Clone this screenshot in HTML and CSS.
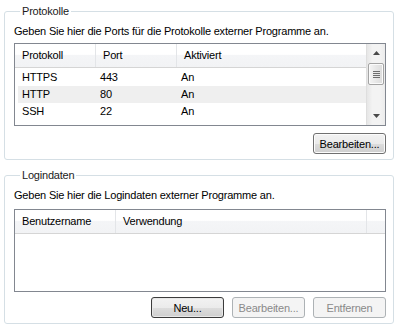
FILE: index.html
```html
<!DOCTYPE html>
<html lang="de">
<head>
<meta charset="utf-8">
<link rel="stylesheet" href="styles.css">
</head>
<body>
<div class="page">
  <fieldset class="group g1">
    <legend>Protokolle</legend>
    <div class="desc">Geben Sie hier die Ports für die Protokolle externer Programme an.</div>
    <div class="lv">
      <div class="lv-main">
        <div class="lv-head">
          <div class="hc c1">Protokoll</div>
          <div class="hc c2">Port</div>
          <div class="hc c3">Aktiviert</div>
        </div>
        <div class="rows">
          <div class="row"><span class="c1">HTTPS</span><span class="c2">443</span><span class="c3">An</span></div>
          <div class="row alt"><span class="c1">HTTP</span><span class="c2">80</span><span class="c3">An</span></div>
          <div class="row"><span class="c1">SSH</span><span class="c2">22</span><span class="c3">An</span></div>
        </div>
      </div>
      <div class="sb">
        <div class="sb-btn"><svg width="7" height="4" viewBox="0 0 7 4"><path d="M3.5 0 L7 4 L0 4 Z" fill="#4a4a4a"/></svg></div>
        <div class="sb-track">
          <div class="thumb"><span></span><span></span><span></span><span></span></div>
        </div>
        <div class="sb-btn"><svg width="7" height="4" viewBox="0 0 7 4"><path d="M0 0 L7 0 L3.5 4 Z" fill="#4a4a4a"/></svg></div>
      </div>
    </div>
    <div class="btns">
      <button class="btn">Bearbeiten...</button>
    </div>
  </fieldset>

  <fieldset class="group g2">
    <legend>Logindaten</legend>
    <div class="desc">Geben Sie hier die Logindaten externer Programme an.</div>
    <div class="lv lv2">
      <div class="lv-main">
        <div class="lv-head">
          <div class="hc d1">Benutzername</div>
          <div class="hc d2">Verwendung</div>
          <div class="hc d3"></div>
        </div>
      </div>
    </div>
    <div class="btns">
      <button class="btn def">Neu...</button>
      <button class="btn" disabled>Bearbeiten...</button>
      <button class="btn" disabled>Entfernen</button>
    </div>
  </fieldset>
</div>
</body>
</html>
```

FILE: styles.css
```css
* { box-sizing: border-box; }
body {
  margin: 0;
  background: #fff;
  font-family: "Liberation Sans", Arial, sans-serif;
  font-size: 11px;
  letter-spacing: -0.2px;
  color: #000;
}
.page {
  padding: 4px 0 0 4px;
  width: 394px;
}
.group {
  margin: 0;
  border: 1px solid #d5dfe5;
  border-radius: 3px;
  padding: 0 7px 5px 9px;
  min-width: 0;
}
.group legend {
  padding: 0 2px;
  margin-left: 6px;
  line-height: 14px;
  height: 14px;
  color: #1b1b1b;
}
.g2 { margin-top: 8px; }
.desc {
  margin-top: 6px;
  line-height: 14px;
  height: 14px;
  white-space: nowrap;
}
.lv {
  margin-top: 5px;
  height: 83px;
  border: 1px solid #828790;
  display: flex;
  background: #fff;
}
.g2 .lv { margin-top: 7px; }
.lv-main {
  flex: 1;
  display: flex;
  flex-direction: column;
  min-width: 0;
}
.lv-head {
  height: 24px;
  display: flex;
  background: linear-gradient(#ffffff 0%, #ffffff 45%, #f4f5f7 50%, #f2f3f5 100%);
  border-bottom: 1px solid #d5d5d5;
}
.hc {
  line-height: 23px;
  padding-left: 7px;
  border-right: 1px solid #e3e5e8;
}
.hc.c1 { width: 81px; }
.hc.c2 { width: 81px; }
.hc.c3 { flex: 1; border-right: 0; }
.hc.d1 { width: 101px; }
.hc.d2 { width: 251px; }
.hc.d3 { flex: 1; border-right: 0; }
.rows { padding: 1px 0 0 3px; }
.row {
  display: flex;
  height: 17px;
  line-height: 17px;
}
.row span { padding-left: 4px; }
.row .c1 { width: 78px; }
.row .c2 { width: 81px; }
.row.alt { background: #efefef; }
.sb {
  width: 19px;
  border-left: 1px solid #dedede;
  background: linear-gradient(to right, #e6e6e6, #f3f3f3 30%, #f3f3f3 70%, #ececec);
  display: flex;
  flex-direction: column;
}
.sb-btn {
  height: 18px;
  display: flex;
  align-items: center;
  justify-content: center;
}
.sb-track {
  flex: 1;
  padding: 1px 1px 0 1px;
}
.thumb {
  height: 22px;
  border: 1px solid #a4a4a4;
  border-radius: 2px;
  background: linear-gradient(to right, #f5f5f5, #e7e7e7 50%, #dcdcdc);
  box-shadow: inset 0 0 0 1px #fbfbfb;
  display: flex;
  flex-direction: column;
  align-items: center;
  justify-content: center;
  gap: 1px;
}
.thumb span {
  width: 7px;
  height: 1px;
  background: #6d6d6d;
}
.btns {
  display: flex;
  justify-content: flex-end;
  gap: 8px;
  margin-top: 7px;
}
.g2 .btns { margin-top: 5px; }
.btn {
  width: 73px;
  height: 21px;
  padding: 0;
  font: inherit;
  letter-spacing: inherit;
  color: #000;
  border: 1px solid #707070;
  border-radius: 3px;
  background: linear-gradient(#f2f2f2 0%, #ebebeb 50%, #dddddd 51%, #cfcfcf 100%);
  box-shadow: inset 0 0 0 1px #fcfcfc;
}
.btn.def {
  border-color: #3c3c3c;
  box-shadow: inset 0 0 0 1px #e8e8e8;
}
.btn:disabled {
  color: #8a8a8a;
  border-color: #adb2b5;
  background: #f4f4f4;
  box-shadow: none;
}
```
